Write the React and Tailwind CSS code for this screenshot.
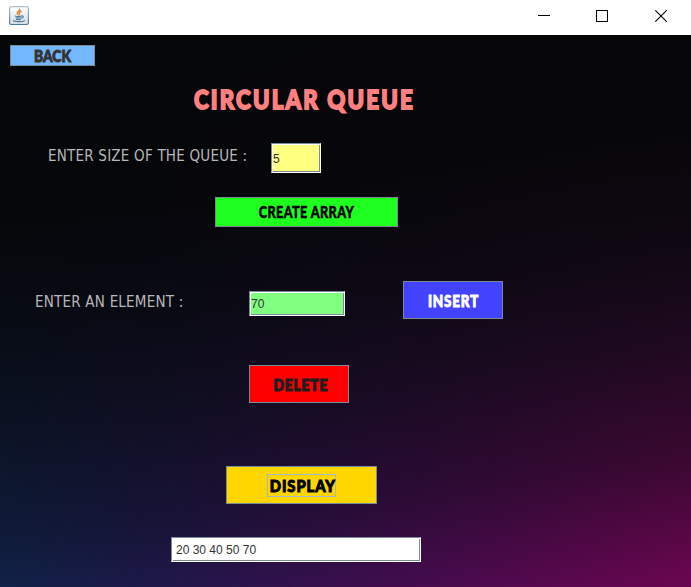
function JavaIcon() {
  return (
    <svg width="20" height="20" viewBox="0 0 20 20" fill="none">
      <defs>
        <linearGradient id="tile" x1="0" y1="0" x2="0" y2="1">
          <stop offset="0" stopColor="#ffffff" />
          <stop offset="1" stopColor="#d5dce3" />
        </linearGradient>
        <linearGradient id="edge" x1="0" y1="0" x2="0" y2="1">
          <stop offset="0" stopColor="#b4bec8" />
          <stop offset="1" stopColor="#527a99" />
        </linearGradient>
      </defs>
      <rect x="0.6" y="0.6" width="18.8" height="17.9" rx="1.8" fill="url(#tile)" stroke="url(#edge)" strokeWidth="1.2" />
      <path d="M10.800 3.300c.7 1.500-2.600 2.100-2.600 3.700 0 1 .9 1.300 1.400 1.900M12.200 5.300c-1.700.6-2.300 1.200-1.800 2.100.3.600.2 1-.3 1.500" stroke="#e58a3e" strokeWidth="1.500" strokeLinecap="round" />
      <path d="M6.300 10c1.600.6 4.400.6 6 0M6.900 11.800c1.500.5 3.500.5 5 0M7.400 13.400c1.200.4 2.800.4 4 0M12.700 10c1.900-.5 2.200 1.300.2 2.100M4.800 14.500c-1 1.200 8.500 1.900 10.700.1" stroke="#4f7d9d" strokeWidth="1.200" strokeLinecap="round" />
    </svg>
  );
}

function TitleBar() {
  return (
    <header className="flex h-[35px] items-start justify-between bg-white">
      <div className="pt-1.5 pl-[9px]">
        <JavaIcon />
      </div>
      <div className="flex pt-[10px] pr-6">
        <svg className="mr-[46px]" width="12" height="12" shapeRendering="crispEdges">
          <path d="M0 5.500H12" stroke="#000" />
        </svg>
        <svg className="mr-[47px]" width="12" height="12" shapeRendering="crispEdges">
          <rect x="0.500" y="0.500" width="11" height="11" fill="none" stroke="#000" />
        </svg>
        <svg width="12" height="12">
          <path d="M0.300 0.300L11.700 11.700M11.700 0.300L0.300 11.700" stroke="#000" strokeWidth="1.100" />
        </svg>
      </div>
    </header>
  );
}

function Button({ className, textClass, children }) {
  return (
    <button className={`flex items-center justify-center border border-[#7a8a99] ${className}`}>
      <span className={`block shrink-0 font-['Lato',sans-serif] text-[16px] leading-none font-black whitespace-nowrap ${textClass}`}>{children}</span>
    </button>
  );
}

function Field({ className, value }) {
  return (
    <input
      readOnly
      value={value}
      className={`block border border-t-[#7a8a99] border-r-white border-b-white border-l-[#7a8a99] py-0 font-['Liberation_Sans',sans-serif] text-xs text-[#333] shadow-[inset_1px_1px_#fff,inset_-1px_-1px_#7a8a99] outline-none ${className}`}
    />
  );
}

function Label({ className, children }) {
  return (
    <label className={`block shrink-0 origin-left font-['DejaVu_Sans_Condensed','DejaVu_Sans',sans-serif] text-[15px] leading-5 tracking-[0.220px] whitespace-nowrap text-[#b8b8b8] [font-stretch:condensed] ${className}`}>
      {children}
    </label>
  );
}

export default function App() {
  return (
    <div className="h-[587px] w-[691px] overflow-hidden">
      <TitleBar />
      <main className="flex h-[552px] flex-col items-start bg-[linear-gradient(173deg,#050608_0%,#050608fa_28%,#06080ce6_46%,#080a10c0_62%,#080a1078_80%,#08080f00_98%),linear-gradient(to_right,#142c60_0%,#221d5a_20%,#351458_38%,#480c54_58%,#5a0850_80%,#68064e_100%)] pt-[10px]">
        <Button className="ml-[10px] h-[21px] w-[85px] bg-[#73b7ff]" textClass="scale-x-[0.86] text-[#333] [-webkit-text-stroke:0.9px_currentColor]">BACK</Button>
        <h1 className="mt-[17px] ml-[194px] origin-left scale-x-[0.825] font-['Lato',sans-serif] text-[27px] leading-8 font-black tracking-[2.600px] whitespace-nowrap text-[#ff8080] [-webkit-text-stroke:1.800px_currentColor]">CIRCULAR QUEUE</h1>
        <div className="mt-[28px] ml-[48px] flex h-[30px]">
          <div className="w-[223px] pt-[3px]">
            <Label>ENTER SIZE OF THE QUEUE :</Label>
          </div>
          <Field value="5" className="h-[30px] w-[50px] bg-[#ffff80] pt-px pl-px" />
        </div>
        <Button className="mt-6 ml-[215px] h-[30px] w-[183px] bg-[#1fff1f]" textClass="scale-x-[0.79] text-black tracking-[0.500px] [-webkit-text-stroke:0.500px_currentColor]">CREATE ARRAY</Button>
        <div className="mt-[54px] ml-[35px] flex h-[38px]">
          <div className="w-[214px] pt-[11px]">
            <Label>ENTER AN ELEMENT :</Label>
          </div>
          <Field value="70" className="mt-[10px] h-[25px] w-[96px] bg-[#80ff80] pl-px" />
          <Button className="ml-[58px] h-[38px] w-[100px] bg-[#4242ff]" textClass="translate-x-px translate-y-px scale-x-[0.84] text-white tracking-[1px] [-webkit-text-stroke:0.900px_currentColor]">INSERT</Button>
        </div>
        <Button className="mt-[46px] ml-[249px] h-[38px] w-[100px] bg-[#ff0000]" textClass="translate-x-[2px] translate-y-px scale-x-[0.86] text-[#1e1e1e] tracking-[1px] [-webkit-text-stroke:1.2px_currentColor]">DELETE</Button>
        <button className="mt-[63px] ml-[226px] flex h-[38px] w-[151px] items-center justify-center border border-[#7a8a99] bg-[#ffd700]">
          <span className="flex h-[23px] w-[69px] items-center justify-center border border-[#a3b8cc]">
            <span className="block shrink-0 translate-x-px translate-y-px scale-x-[0.92] font-['Lato',sans-serif] text-[16px] leading-none font-black tracking-[1px] whitespace-nowrap text-black [-webkit-text-stroke:1px_currentColor]">DISPLAY</span>
          </span>
        </button>
        <Field value="20 30 40 50 70" className="mt-[33px] ml-[171px] h-[25px] w-[250px] bg-white pl-1" />
      </main>
    </div>
  );
}
